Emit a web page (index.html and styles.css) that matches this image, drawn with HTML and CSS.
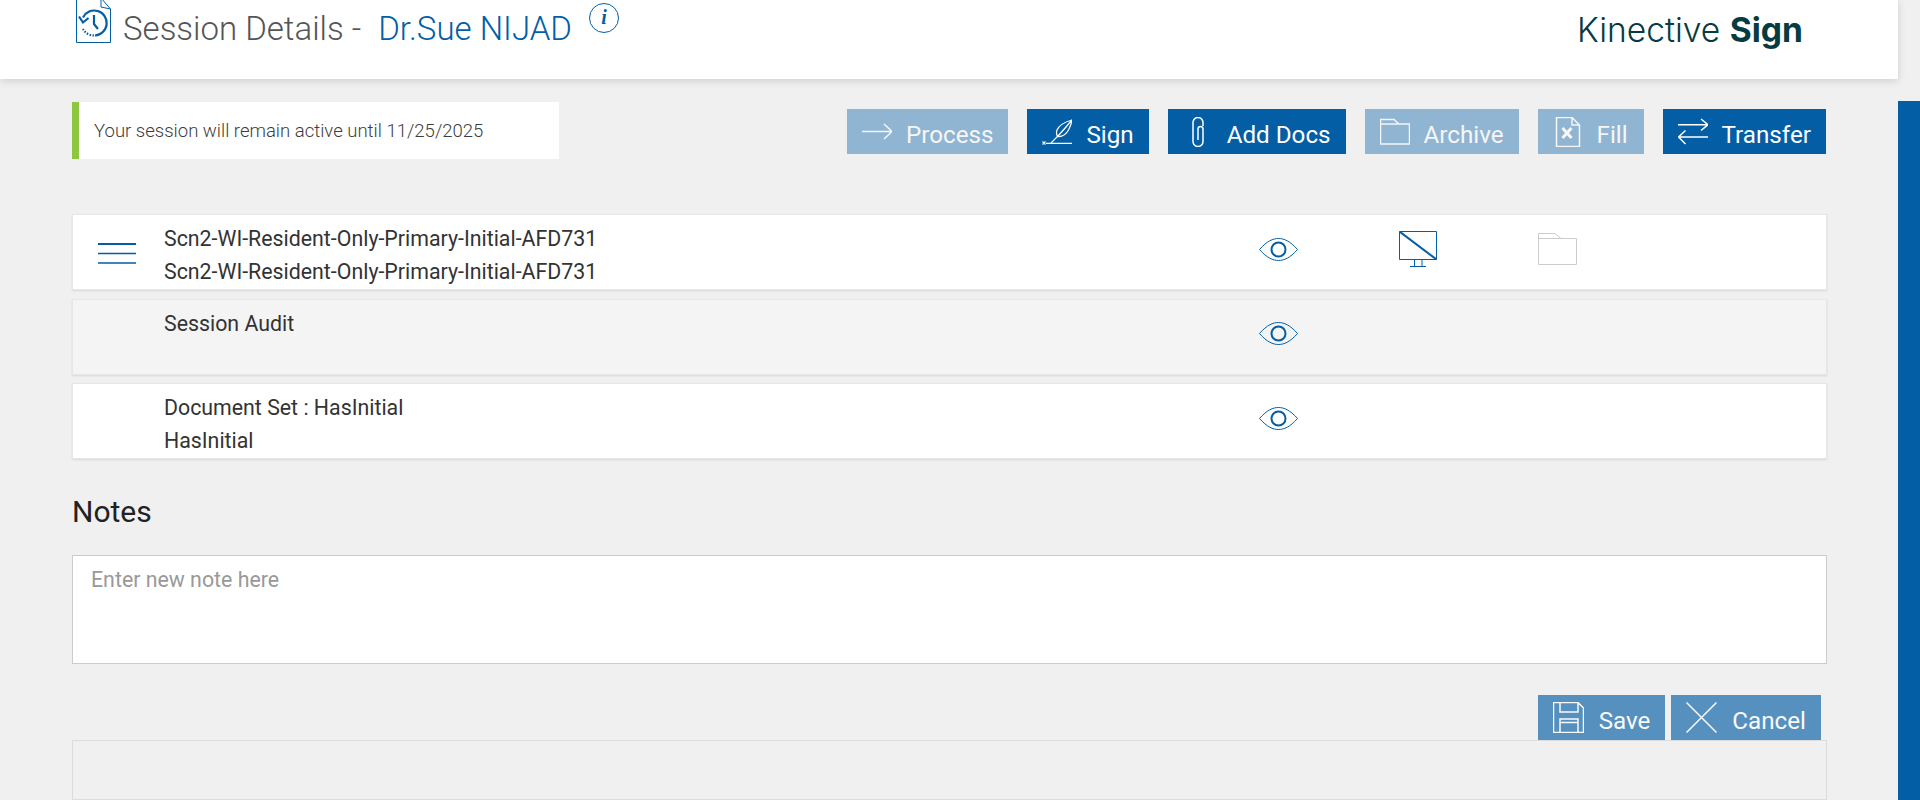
FILE: index.html
```html
<!DOCTYPE html>
<html lang="en">
<head>
<meta charset="utf-8">
<title>Session Details</title>
<link rel="stylesheet" href="styles.css">
</head>
<body>
<div class="page">
  <header class="header">
    <svg class="doc-icon" width="35" height="44" viewBox="0 0 35 44" fill="none" stroke="#035ea6">
      <path d="M.5 -2V42.5H34.5V9L25 -2M25 -2V7L34.5 9"/>
      <path d="M7 17.5A12.5 12.5 0 1 1 19 35.5" stroke-width="2.2"/>
      <path d="M18 35.5A12.5 12.5 0 0 1 7 29" stroke-width="2.2" stroke-dasharray="1.5 1.5"/>
      <path d="M3 16.5L7 22.5L12.5 18" stroke-width="2.2"/>
      <path d="M18 15V24L22 29" stroke-width="2.2"/>
    </svg>
    <h1 class="title">Session Details -<span class="title-name">Dr.Sue NIJAD</span></h1>
    <span class="info">i</span>
    <div class="logo">Kinective <b>Sign</b></div>
  </header>

  <div class="toolbar">
    <div class="alert">Your session will remain active until 11/25/2025</div>
    <div class="actions">
      <a class="btn off">
        <svg class="btn-icon" viewBox="0 0 30 30"><path d="M0 14.5H30M22 7L30 14.5L22 22"/></svg><span class="btn-label">Process</span>
      </a>
      <a class="btn">
        <svg class="btn-icon btn-icon-fine" viewBox="0 0 30 30"><path d="M4 26.3H30M.5 24.5L3.5 27.5M3.5 24.5L.5 27.5M30 3C23 5 17 8.5 15 13C14 15.5 14.5 17.5 15.5 19.5L9 26M15.5 19.5C20 20 24 17.5 26.5 13C28 10 29.5 7 30 3ZM15.5 19.5L25 9"/></svg><span class="btn-label">Sign</span>
      </a>
      <a class="btn">
        <svg class="btn-icon" viewBox="0 0 30 30"><path d="M20 9V5.5A5 5 0 0 0 10 5.5V24.5A5 5 0 0 0 20 24.5V12A2.5 2.5 0 0 0 15 12V23"/></svg><span class="btn-label">Add Docs</span>
      </a>
      <a class="btn off">
        <svg class="btn-icon" viewBox="0 0 30 30"><path d="M.5 27V2.5H14L19 7H29.5V27ZM.5 7H19"/></svg><span class="btn-label">Archive</span>
      </a>
      <a class="btn off btn-fill">
        <svg class="btn-icon" viewBox="0 0 30 30"><path d="M3.5 .5H19L26.5 8V29.5H3.5ZM19 .5V8H26.5"/><path class="thick" d="M9.5 11L18.5 21M18.5 11L9.5 21"/></svg><span class="btn-label">Fill</span>
      </a>
      <a class="btn">
        <svg class="btn-icon" viewBox="0 0 30 30"><path d="M0 7.7H30M23 2L30 7.7L23 13.5M30 20H.5M7.5 13.5L.5 20L7.5 27"/></svg><span class="btn-label">Transfer</span>
      </a>
    </div>
  </div>

  <section class="rows">
    <div class="row">
      <svg class="menu-icon" width="38" height="22" viewBox="0 0 38 22" stroke="#035ea6"><path d="M0 1H38" stroke-width="2"/><path d="M0 10.5H38M0 20H38" stroke-width="1.5"/></svg>
      <div class="row-text"><div>Scn2-WI-Resident-Only-Primary-Initial-AFD731</div><div>Scn2-WI-Resident-Only-Primary-Initial-AFD731</div></div>
      <svg class="eye" viewBox="0 0 40 24"><path d="M.5 11.5C8 3 14 .5 19.5 .5C25 .5 31 3 38.5 11.5C31 20 25 22.5 19.5 22.5C14 22.5 8 20 .5 11.5Z"/><circle cx="19.5" cy="11.5" r="7" stroke-width="2"/></svg>
      <svg class="monitor" width="38" height="36" viewBox="0 0 38 36" fill="none" stroke="#035ea6"><path d="M.5 .5H37.5V28.5H.5ZM15.5 28.5V35.5M23 28.5V35.5M11 35.5H27"/><path d="M.5 .5L37.5 28.5" stroke-width="2"/></svg>
      <svg class="folder" width="39" height="32" viewBox="0 0 39 32" fill="none" stroke="#cccccc"><path d="M.5 31.5V.5H17L23 5.5H38.5V31.5ZM.5 5.5H23"/></svg>
    </div>
    <div class="row row-alt">
      <span class="menu-space"></span>
      <div class="row-text"><div>Session Audit</div></div>
      <svg class="eye" viewBox="0 0 40 24"><path d="M.5 11.5C8 3 14 .5 19.5 .5C25 .5 31 3 38.5 11.5C31 20 25 22.5 19.5 22.5C14 22.5 8 20 .5 11.5Z"/><circle cx="19.5" cy="11.5" r="7" stroke-width="2"/></svg>
    </div>
    <div class="row">
      <span class="menu-space"></span>
      <div class="row-text"><div>Document Set : HasInitial</div><div>HasInitial</div></div>
      <svg class="eye" viewBox="0 0 40 24"><path d="M.5 11.5C8 3 14 .5 19.5 .5C25 .5 31 3 38.5 11.5C31 20 25 22.5 19.5 22.5C14 22.5 8 20 .5 11.5Z"/><circle cx="19.5" cy="11.5" r="7" stroke-width="2"/></svg>
    </div>
  </section>

  <h2 class="notes-title">Notes</h2>
  <textarea class="notes-input" placeholder="Enter new note here"></textarea>
  <div class="note-actions">
    <a class="btn soft">
      <svg class="btn-icon" viewBox="0 0 31 31"><path d="M.5 .5H25L30.5 6V30.5H.5ZM7 .5V10H25V.5M7 30.5V17H25V30.5M7 20.5H25"/></svg><span class="btn-label">Save</span>
    </a>
    <a class="btn soft">
      <svg class="btn-icon" viewBox="0 0 31 31"><path d="M.5 .5L30.5 30.5M30.5 .5L.5 30.5"/></svg><span class="btn-label">Cancel</span>
    </a>
  </div>
  <div class="notes-list"></div>
</div>
<aside class="side-strip"></aside>
</body>
</html>
```
FILE: styles.css
```css
* { box-sizing: border-box; }
html, body { margin: 0; height: 800px; overflow: hidden; }
body {
  display: flex;
  background: #f0f0f0;
  font-family: Roboto, "Liberation Sans", sans-serif;
  color: #333;
}
.page { width: 1898px; flex: none; }
.side-strip { width: 22px; height: 699px; margin-top: 101px; background: #035ea6; flex: none; }

.header {
  height: 79px;
  background: #fff;
  box-shadow: 0 2px 8px rgba(0,0,0,.14);
  display: flex;
  align-items: flex-start;
  padding: 0 95px 0 76px;
}
.doc-icon { flex: none; }
.title {
  margin: 6px 0 0 12px;
  font-size: 33px;
  line-height: 46px;
  font-weight: 300;
  color: #555;
}
.title-name { margin-left: 17px; color: #035ea6; }
.info {
  width: 30px;
  height: 30px;
  margin: 3px 0 0 17px;
  border: 1px solid #035ea6;
  border-radius: 50%;
  color: #035ea6;
  font: italic bold 20px/26px "Liberation Serif", serif;
  text-align: center;
}
.logo {
  margin: 8px 0 0 auto;
  font-family: Inter, sans-serif;
  font-weight: 300;
  font-size: 33.6px;
  line-height: 44px;
  color: #063b42;
}
.logo b { font-weight: 700; }

.toolbar {
  display: flex;
  justify-content: space-between;
  align-items: flex-start;
  margin-top: 23px;
  padding: 0 72px;
}
.alert {
  width: 487px;
  height: 57px;
  background: #fff;
  border-left: 7px solid #8dc63f;
  padding-left: 15px;
  font-size: 18.55px;
  font-weight: 300;
  line-height: 58px;
  color: #3d3d3d;
}
.actions { display: flex; gap: 19px; margin-top: 7px; }
.btn {
  display: flex;
  align-items: center;
  gap: 14px;
  height: 45px;
  padding: 0 15px;
  background: #035ea6;
  color: #fff;
  font-size: 24.2px;
}
.btn-fill { padding-right: 16px; }
.btn-label { padding-top: 6px; }
.btn.off { opacity: .4; }
.btn.soft { opacity: .65; gap: 15px; }
.btn-icon {
  width: 30px;
  height: 30px;
  flex: none;
  fill: none;
  stroke: #fff;
  stroke-width: 1.5;
}
.btn.soft .btn-icon { width: 31px; height: 31px; }
.btn-icon-fine { stroke-width: 1.2; }
.btn-icon .thick { stroke-width: 3; }

.rows { display: flex; flex-direction: column; gap: 8px; margin: 55px 0 0 72px; width: 1755px; }
.row {
  height: 76px;
  display: grid;
  grid-template-columns: 91px 1045px 139px 139px 139px;
  align-items: start;
  background: #fff;
  border: 1px solid #e6e6e6;
  box-shadow: 0 1px 2px rgba(0,0,0,.1);
}
.row:first-child { margin-bottom: 1px; }
.row-alt { background: #f4f4f4; }
.menu-icon { margin: 28px 0 0 25px; }
.menu-space { display: block; }
.row-text { padding-top: 7px; font-size: 21.33px; line-height: 33px; }
.eye {
  width: 40px;
  height: 24px;
  margin: 23px 0 0 50px;
  fill: none;
  stroke: #035ea6;
  stroke-width: 1;
}
.row-alt .eye { margin-top: 22px; }
.monitor { margin: 16px 0 0 51px; }
.folder { margin: 18px 0 0 51px; }

.notes-title {
  margin: 33px 0 23px 72px;
  font-size: 30px;
  line-height: 40px;
  font-weight: 400;
  color: #222;
}
.notes-input {
  display: block;
  width: 1755px;
  height: 109px;
  margin-left: 72px;
  padding: 11px 18px;
  border: 1px solid #ccc;
  background: #fff;
  resize: none;
  outline: none;
  font: 21.33px Roboto, sans-serif;
}
.notes-input::placeholder { color: #999; opacity: 1; }
.note-actions {
  display: flex;
  justify-content: flex-end;
  gap: 6px;
  width: 1821px;
  margin-top: 31px;
}
.notes-list {
  width: 1755px;
  height: 60px;
  margin-left: 72px;
  border: 1px solid #dcdcdc;
}
```
